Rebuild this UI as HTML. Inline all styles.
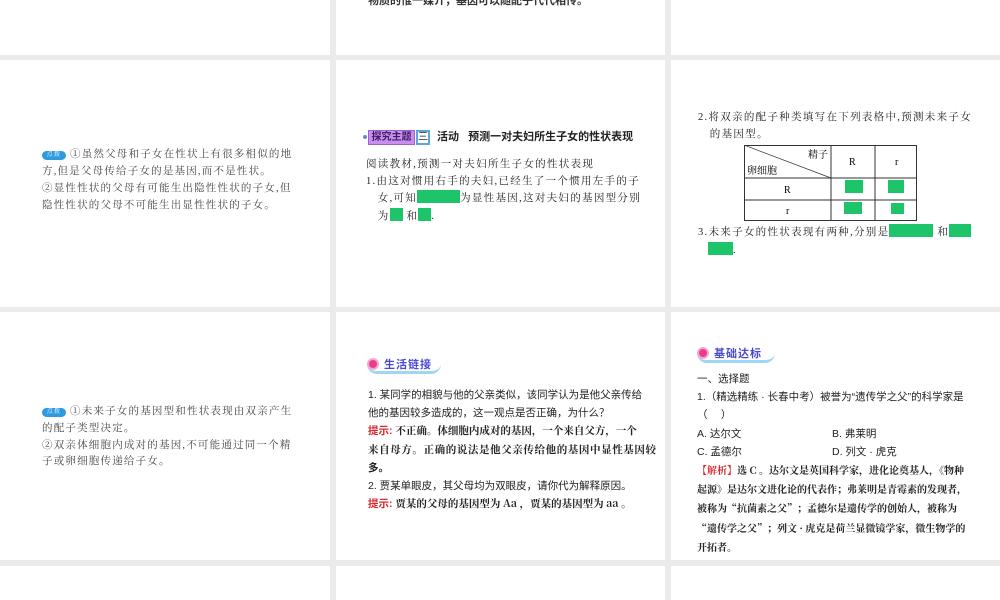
<!DOCTYPE html>
<html><head><meta charset="utf-8"><style>
*{margin:0;padding:0;box-sizing:border-box}
body{width:1000px;height:600px;background:#ebebeb;position:relative;overflow:hidden;font-family:"Liberation Serif","Noto Serif CJK SC",serif;color:#222}
.t{position:absolute;background:#fff}
.a{position:absolute;white-space:nowrap}
.s{font-size:10.5px;color:#444;letter-spacing:1.2px}
.g{display:inline-block;background:#1ec46a;height:13px;vertical-align:-2px}
.k{font-family:"Liberation Sans","Noto Sans CJK SC",sans-serif}
.red{color:#d9282f}
.ban{position:absolute;height:19px;border-bottom:3px solid #9fd6f2;border-radius:0 0 10px 10px}
.ban i{position:absolute;left:0;top:3px;width:12px;height:12px;border-radius:50%;background:#e93d8e;border:2px solid #f6a7cf}
.ban b{position:absolute;left:17px;top:1px;font-size:11px;color:#4a4ad0;font-family:"Noto Sans CJK SC",sans-serif;font-weight:bold;letter-spacing:1px}
.badge{display:inline-block;width:24px;height:9px;border-radius:5px;background:#2e9be0;color:#fff;font-size:6px;line-height:9px;text-align:center;vertical-align:1px;margin-right:4px}
</style></head><body>
<div class="t" style="left:0;top:0;width:330px;height:55px"></div>
<div class="t" style="left:336px;top:0;width:329px;height:55px"></div>
<div class="t" style="left:671px;top:0;width:329px;height:55px"></div>
<div class="t" style="left:0;top:60px;width:330px;height:247px"></div>
<div class="t" style="left:336px;top:60px;width:329px;height:247px"></div>
<div class="t" style="left:671px;top:60px;width:329px;height:247px"></div>
<div class="t" style="left:0;top:312px;width:330px;height:248px"></div>
<div class="t" style="left:336px;top:312px;width:329px;height:248px"></div>
<div class="t" style="left:671px;top:312px;width:329px;height:248px"></div>
<div class="t" style="left:0;top:566px;width:330px;height:34px"></div>
<div class="t" style="left:336px;top:566px;width:329px;height:34px"></div>
<div class="t" style="left:671px;top:566px;width:329px;height:34px"></div>

<div class="a k" style="left:368px;top:-8px;font-size:11px;font-weight:bold;color:#333">物质的惟一媒介，基因可以随配子代代相传。</div>

<!-- row1 col1 -->
<div class="a s" style="left:42px;top:146px;line-height:17px"><span class="badge">点拨</span>①虽然父母和子女在性状上有很多相似的地<br>方,但是父母传给子女的是基因,而不是性状。<br>②显性性状的父母有可能生出隐性性状的子女,但<br>隐性性状的父母不可能生出显性性状的子女。</div>

<!-- row1 col2 -->
<div class="a" style="left:363px;top:135px;width:4px;height:4px;border-radius:50%;background:#5b8ee0"></div>
<div class="a k" style="left:368px;top:130px;height:15px;width:47px;background:#c98ef0;border:1px solid #a060d0;font-size:10px;font-weight:bold;color:#402060;line-height:13px;text-align:center">探究主题</div>
<div class="a k" style="left:416px;top:130px;height:15px;width:14px;border:2px solid #5ba7d8;font-size:10px;line-height:11px;text-align:center">三</div>
<div class="a k" style="left:437px;top:130px;font-size:11px;font-weight:bold;line-height:15px">活动 &nbsp; 预测一对夫妇所生子女的性状表现</div>
<div class="a" style="left:366px;top:157px;font-size:10.5px;line-height:16.5px;letter-spacing:1.3px">阅读教材,预测一对夫妇所生子女的性状表现<br>1.由这对惯用右手的夫妇,已经生了一个惯用左手的子<br>&nbsp;&nbsp; 女,可知<span class="g" style="width:43px"></span>为显性基因,这对夫妇的基因型分别<br>&nbsp;&nbsp; 为<span class="g" style="width:13px"></span> 和<span class="g" style="width:13px"></span>.</div>

<!-- row1 col3 -->
<div class="a" style="left:698px;top:110px;font-size:10.5px;line-height:16.5px;letter-spacing:1.3px">2.将双亲的配子种类填写在下列表格中,预测未来子女<br>&nbsp;&nbsp; 的基因型。</div>
<svg class="a" style="left:744px;top:145px" width="174" height="77">
<rect x="0.5" y="0.5" width="172" height="75" fill="none" stroke="#333"/>
<line x1="87" y1="0" x2="87" y2="76" stroke="#333"/><line x1="131" y1="0" x2="131" y2="76" stroke="#333"/>
<line x1="0" y1="33" x2="173" y2="33" stroke="#333"/><line x1="0" y1="55" x2="173" y2="55" stroke="#333"/>
<line x1="0" y1="0" x2="87" y2="33" stroke="#333" stroke-width=".7"/>
<text x="64" y="13" font-size="10">精子</text><text x="3" y="29" font-size="10">卵细胞</text>
<text x="105" y="20" font-size="10">R</text><text x="151" y="20" font-size="10">r</text>
<text x="40" y="48" font-size="10">R</text><text x="42" y="69" font-size="10">r</text>
<rect x="101" y="35" width="18" height="13" fill="#1ec46a"/><rect x="144" y="35" width="16" height="13" fill="#1ec46a"/>
<rect x="100" y="57" width="18" height="12" fill="#1ec46a"/><rect x="147" y="58" width="13" height="11" fill="#1ec46a"/>
</svg>
<div class="a" style="left:698px;top:224px;font-size:10.5px;line-height:16.5px;letter-spacing:1.3px">3.未来子女的性状表现有两种,分别是<span class="g" style="width:44px"></span> 和<span class="g" style="width:22px"></span><br><span class="g" style="width:25px;margin-left:10px"></span>.</div>

<!-- row2 col1 -->
<div class="a s" style="left:42px;top:404px;line-height:16.8px"><span class="badge">点拨</span>①未来子女的基因型和性状表现由双亲产生<br>的配子类型决定。<br>②双亲体细胞内成对的基因,不可能通过同一个精<br>子或卵细胞传递给子女。</div>

<!-- row2 col2 -->
<div class="ban" style="left:367px;top:355px;width:74px"><i></i><b>生活链接</b></div>
<div class="a k" style="left:368px;top:386px;font-size:10.5px;line-height:18.2px;color:#222">1. 某同学的相貌与他的父亲类似，该同学认为是他父亲传给<br>他的基因较多造成的，这一观点是否正确，为什么？<br><span class="red" style="font-weight:bold">提示:</span> <span style="font-family:'Noto Serif CJK SC',serif;font-weight:bold">不正确。体细胞内成对的基因，一个来自父方，一个</span><br><span style="font-family:'Noto Serif CJK SC',serif;font-weight:bold;letter-spacing:.6px">来自母方。正确的说法是他父亲传给他的基因中显性基因较</span><br><span style="font-weight:bold">多。</span><br>2. 贾某单眼皮，其父母均为双眼皮，请你代为解释原因。<br><span class="red" style="font-weight:bold">提示:</span> <span style="font-family:'Noto Serif CJK SC',serif;font-weight:bold">贾某的父母的基因型为 Aa ，贾某的基因型为 aa 。</span></div>

<!-- row2 col3 -->
<div class="ban" style="left:697px;top:344px;width:78px"><i></i><b>基础达标</b></div>
<div class="a k" style="left:697px;top:370px;font-size:10.5px;line-height:18.2px;color:#222">一、选择题<br>1.（精选精练 · 长春中考）被誉为“遗传学之父”的科学家是<br>（　 ）<br>A. 达尔文<span style="position:absolute;left:135px">B. 弗莱明</span><br>C. 孟德尔<span style="position:absolute;left:135px">D. 列文 · 虎克</span><br><span style="font-family:'Noto Serif CJK SC',serif;font-weight:bold;font-size:10px"><span class="red">【解析】</span>选 C 。达尔文是英国科学家，进化论奠基人，《物种<br>起源》是达尔文进化论的代表作；弗莱明是青霉素的发现者，<br>被称为“抗菌素之父”；孟德尔是遗传学的创始人，被称为<br>“遗传学之父”；列文 · 虎克是荷兰显微镜学家，微生物学的<br>开拓者。</span></div>
</body></html>
